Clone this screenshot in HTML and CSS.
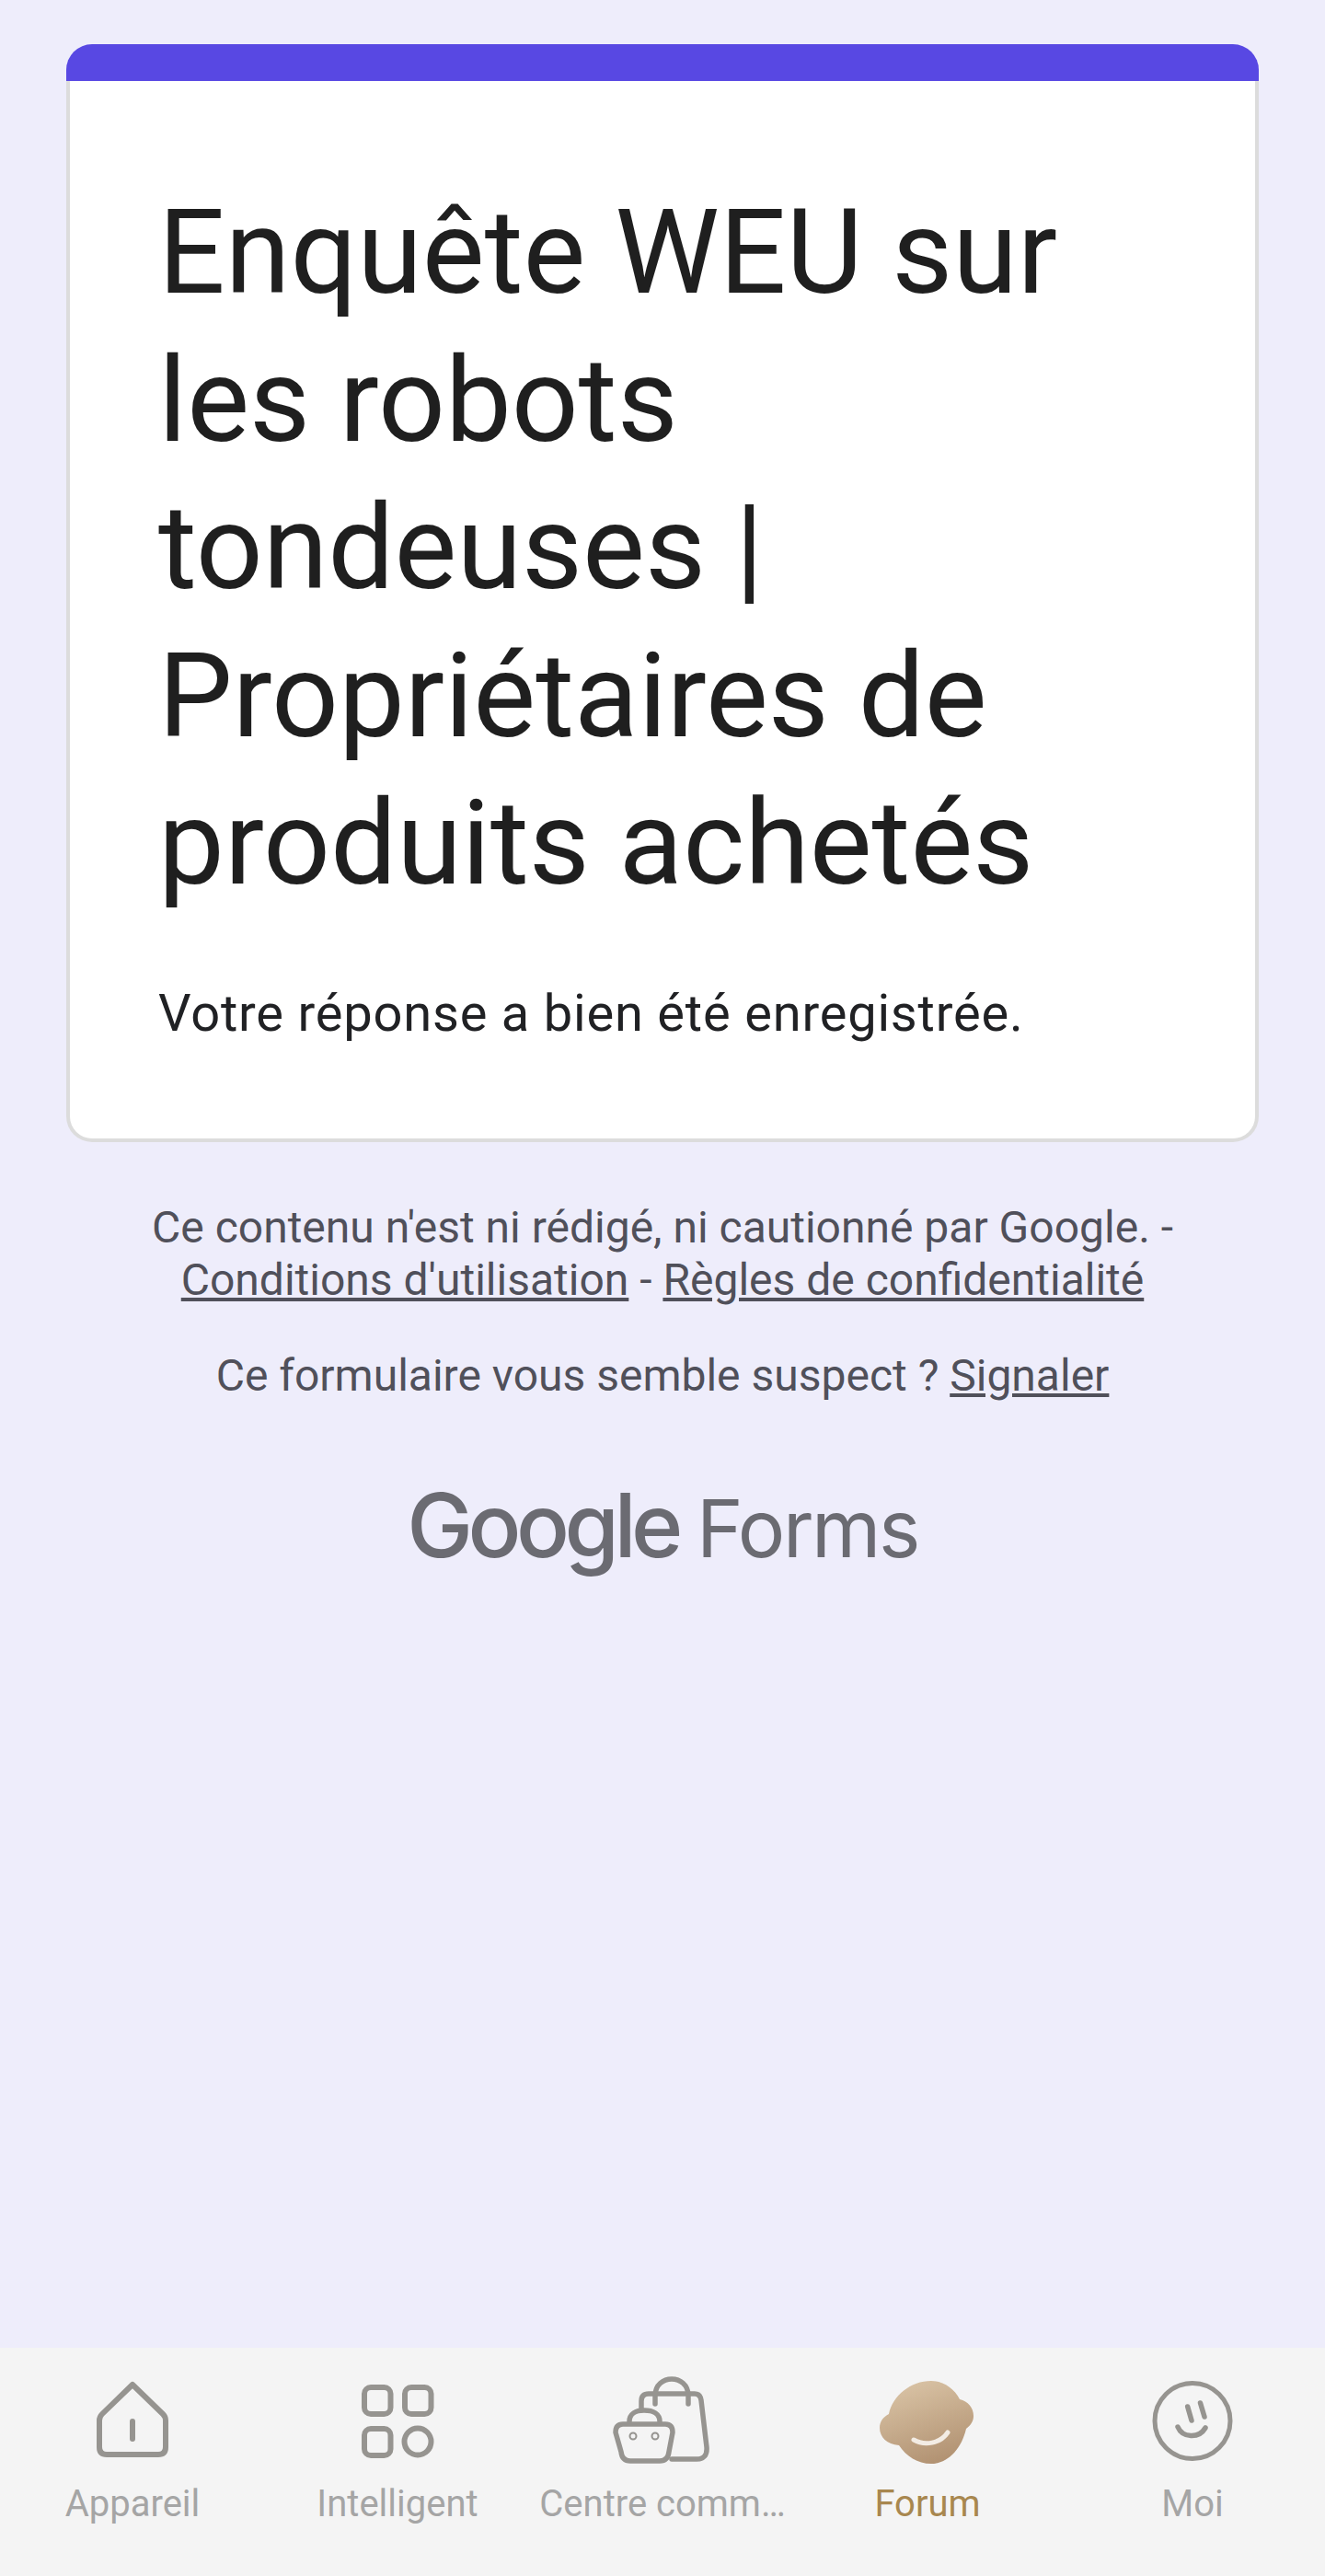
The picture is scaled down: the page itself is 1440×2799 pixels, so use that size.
FILE: index.html
```html
<!DOCTYPE html>
<html lang="fr">
<head>
    <meta charset="UTF-8">
    <meta name="viewport" content="width=device-width, initial-scale=1.0">
    <title>Enquête WEU sur les robots tondeuses</title>
    <link rel="stylesheet" href="styles.css">
</head>
<body>
    <div class="app">
        <div class="page">
            <div class="card">
                <div class="card-top"></div>
                <div class="card-body">
                    <h1>Enquête WEU sur les robots tondeuses | Propriétaires de produits achetés</h1>
                    <p class="confirm">Votre réponse a bien été enregistrée.</p>
                </div>
            </div>
            <div class="notice">
                <p>Ce contenu n'est ni rédigé, ni cautionné par Google. - <a href="#">Conditions d'utilisation</a> - <a href="#">Règles de confidentialité</a></p>
                <p class="report">Ce formulaire vous semble suspect ? <a href="#">Signaler</a></p>
            </div>
            <div class="brand"><span class="brand-google">Google</span><span class="brand-forms">Forms</span></div>
        </div>

        <div class="tabbar">
            <div class="tab">
                <svg class="tab-icon" viewBox="0 0 110 100" fill="none" stroke="#969490" stroke-width="6" stroke-linecap="round" stroke-linejoin="round">
                    <path d="M55 12 L88 44 Q91 47 91 51 V80 Q91 88 83 88 H27 Q19 88 19 80 V51 Q19 47 22 44 Z"/>
                    <path d="M55 52 V71"/>
                </svg>
                <span>Appareil</span>
            </div>
            <div class="tab">
                <svg class="tab-icon" viewBox="0 0 110 100" fill="none" stroke="#969490" stroke-width="6">
                    <rect x="19" y="15" width="28.5" height="29" rx="7"/>
                    <rect x="63" y="15" width="28.5" height="29" rx="7"/>
                    <rect x="19" y="60" width="28.5" height="29" rx="7"/>
                    <circle cx="77" cy="74" r="14.5"/>
                </svg>
                <span>Intelligent</span>
            </div>
            <div class="tab">
                <svg class="tab-icon" viewBox="0 0 110 100" fill="none" stroke="#969490" stroke-width="5.5" stroke-linecap="round" stroke-linejoin="round">
                    <path d="M32 38 V30 Q32 22 40 22 H90 Q96 22 97 29 L103 80 Q104 93 92 93 H65"/>
                    <path d="M47 33 V24 C47 12 56 6 65 6 C74 6 83 12 83 24 V33"/>
                    <path d="M12 55 H58 Q66 55 66 64 L62 85 Q61 95 52 95 H20 Q11 95 10 85 L4 64 Q4 55 12 55 Z"/>
                    <path d="M19 52 C19 44 26 40 35 40 C45 40 52 44 52 52"/>
                    <circle cx="23" cy="68" r="1" stroke-width="7"/>
                    <circle cx="47" cy="68" r="1" stroke-width="7"/>
                </svg>
                <span>Centre comm…</span>
            </div>
            <div class="tab tab-active">
                <svg class="tab-icon" viewBox="0 0 110 100">
                    <defs>
                        <linearGradient id="forumFill" x1="0.3" y1="0" x2="0.7" y2="1">
                            <stop offset="0" stop-color="#d9c3a5"/>
                            <stop offset="1" stop-color="#b09070"/>
                        </linearGradient>
                    </defs>
                    <path fill="url(#forumFill)" d="M59 8 C72 8 84 16 90 28 C99 30 105 37 105 46 C105 52 102 56 97 60 C92 82 77 98 59 98 C44 98 32 90 24 78 C11 77 3 69 3 59 C3 52 7 47 13 44 C17 24 37 8 59 8 Z"/>
                    <path fill="none" stroke="#f3ece4" stroke-width="5" stroke-linecap="round" d="M40 72 C52 79 69 76 77 64"/>
                </svg>
                <span>Forum</span>
            </div>
            <div class="tab">
                <svg class="tab-icon" viewBox="0 0 110 100" fill="none" stroke="#969490" stroke-width="5" stroke-linecap="round">
                    <circle cx="55" cy="51.5" r="41"/>
                    <path d="M49.7 36 L54 51 M63.5 32 L68 47" stroke-width="5.5"/>
                    <path d="M39 58 C44 70 62 71 69 59" stroke-width="5.5"/>
                </svg>
                <span>Moi</span>
            </div>
        </div>
    </div>
</body>
</html>
```

FILE: styles.css
```css
* {
    margin: 0;
    padding: 0;
    box-sizing: border-box;
}

body {
    font-family: Roboto, sans-serif;
    background-color: #eeedfb;
}

.app {
    display: flex;
    flex-direction: column;
    height: 2799px;
}

.page {
    flex-grow: 1;
    padding: 48px 72px 0;
}

.card-top {
    height: 40px;
    border-radius: 28px 28px 0 0;
    background-color: #5848e3;
}

.card-body {
    height: 1153px;
    padding: 106px 96px 0;
    background-color: white;
    border: 4px solid #dcdcdc;
    border-top: none;
    border-radius: 0 0 28px 28px;
}

h1 {
    font-size: 128px;
    font-weight: 400;
    line-height: 160.5px;
    color: #1f1f1f;
}

.confirm {
    margin-top: 69px;
    font-size: 56px;
    line-height: 70px;
    letter-spacing: 0.8px;
    color: #202124;
}

.notice {
    margin-top: 64px;
    padding: 0 20px;
    text-align: center;
    font-size: 48px;
    line-height: 57px;
    color: #50505a;
}

.notice a {
    color: #50505a;
}

.report {
    margin-top: 47px;
}

.brand {
    display: flex;
    justify-content: center;
    align-items: baseline;
    gap: 20px;
    margin-top: 79px;
    font-family: Inter, sans-serif;
    line-height: 110px;
    color: #6b6b72;
}

.brand-google {
    font-size: 96px;
    font-weight: 500;
    letter-spacing: -5.5px;
}

.brand-forms {
    font-size: 86px;
    letter-spacing: -2.5px;
}

.tabbar {
    display: flex;
    height: 248px;
    background-color: #f4f4f4;
}

.tab {
    width: 20%;
    display: flex;
    flex-direction: column;
    align-items: center;
    padding-top: 28px;
    font-size: 40px;
    line-height: 48px;
    color: #a5a5a5;
    white-space: nowrap;
}

.tab-icon {
    width: 110px;
    height: 100px;
    margin-bottom: 18px;
}

.tab-active {
    color: #a8874f;
}
```
